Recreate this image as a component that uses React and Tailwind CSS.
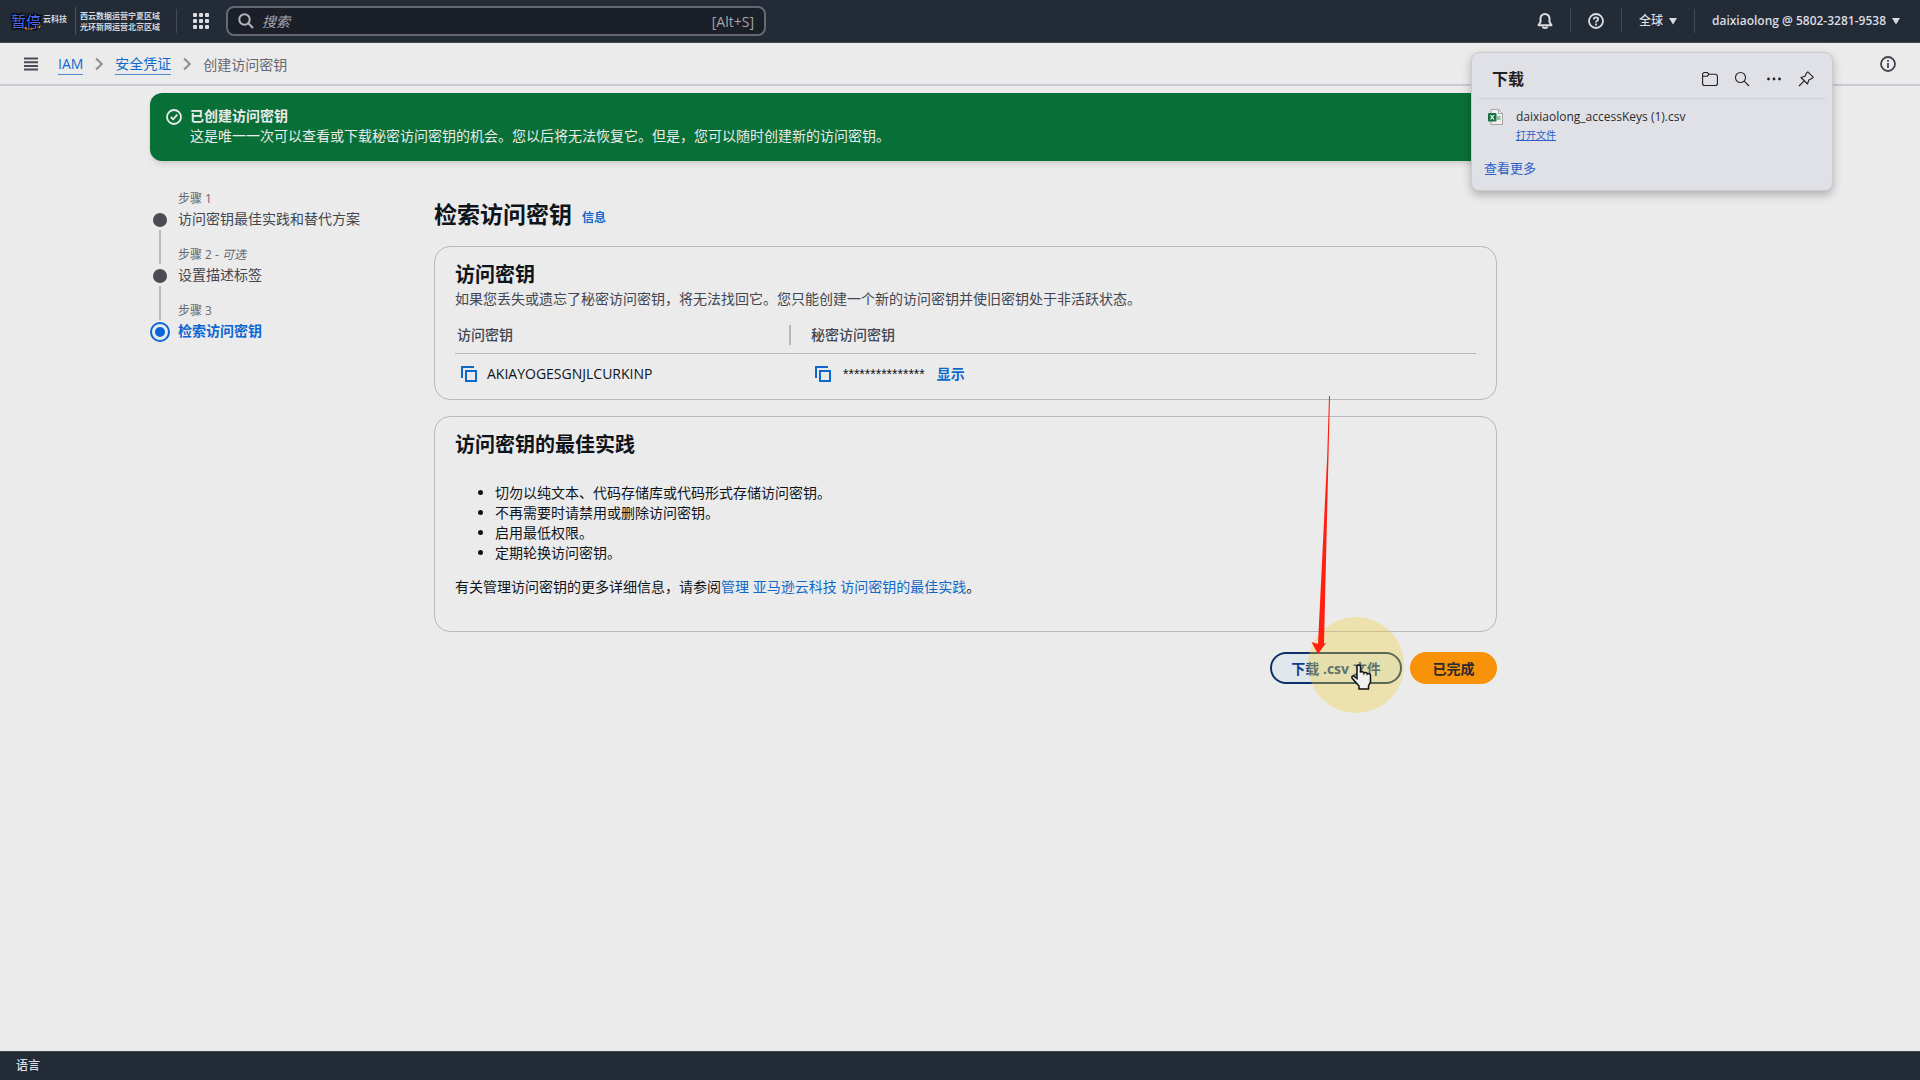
import { useState } from "react";

const ACCESS_KEY = "AKIAYOGESGNJLCURKINP";
const SECRET_MASK = "***************";

const steps = [
  { numero: "步骤 1", titulo: "访问密钥最佳实践和替代方案" },
  { numero: "步骤 2", titulo: "设置描述标签", opcional: true },
  { numero: "步骤 3", titulo: "检索访问密钥", activo: true },
];

const practices = [
  "切勿以纯文本、代码存储库或代码形式存储访问密钥。",
  "不再需要时请禁用或删除访问密钥。",
  "启用最低权限。",
  "定期轮换访问密钥。",
];

function Chevron() {
  return (
    <svg className="h-4 w-4 text-[#8c8c94]" viewBox="0 0 16 16" fill="none" stroke="currentColor" strokeWidth="2">
      <path d="M5 2.5 10.8 8 5 13.5" />
    </svg>
  );
}

function CopyIcon() {
  return (
    <svg className="h-4 w-4" viewBox="0 0 16 16" fill="none" stroke="currentColor" strokeWidth="2">
      <path d="M1 12V1h12" />
      <path d="M5 5h10v10H5z" />
    </svg>
  );
}

function Caret() {
  return (
    <svg className="h-2 w-2" viewBox="0 0 8 8" fill="currentColor">
      <path d="M0 1h8L4 7.5z" />
    </svg>
  );
}

function Divider() {
  return <span className="h-6 w-px bg-[#424a55]" />;
}

function Logo() {
  return (
    <a href="#" className="flex h-11 items-center">
      <span className="relative flex items-center">
        <svg className="h-5 w-8" viewBox="0 0 32 20" fill="none">
          <path d="M11 15.5c5 3 11 3 16 0" stroke="#f79209" strokeWidth="2" />
          <path d="M26 14.5l3-.5-1 3" stroke="#f79209" strokeWidth="1.4" />
        </svg>
        <span className="absolute left-0 top-0 text-[15px] leading-5 text-[#4a6cf0] [text-shadow:0_0_2px_#000,1px_1px_1px_#000,-1px_-1px_1px_#000,1px_-1px_1px_#000,-1px_1px_1px_#000]">
          暂停
        </span>
        <span className="pb-1 text-[8px] leading-3 font-bold text-[#d5d7da]">云科技</span>
      </span>
      <span className="ml-2 flex h-7 flex-col justify-center border-l border-[#4b525d] pl-1 text-[8px] leading-[11px] font-bold text-[#d5d7da]">
        <span>西云数据运营宁夏区域</span>
        <span>光环新网运营北京区域</span>
      </span>
    </a>
  );
}

function TopBar() {
  return (
    <header className="flex h-[43px] items-center border-b border-[#424650] bg-[#232b36] pr-5 pl-[11px] text-[#dcdce2]">
      <Logo />
      <span className="ml-4 flex">
        <Divider />
      </span>
      <button className="ml-4 p-0" aria-label="服务">
        <svg className="h-4 w-4" viewBox="0 0 16 16" fill="currentColor">
          {[0, 6, 12].map((y) => [0, 6, 12].map((x) => <rect key={`${x}-${y}`} x={x} y={y} width="4" height="4" rx="1" />))}
        </svg>
      </button>
      <label className="ml-[17px] flex h-[30px] w-[540px] items-center rounded-lg border-2 border-[#656871] bg-[#1b1f27] px-2.5">
        <svg className="h-4 w-4 shrink-0 text-[#b4b5bc]" viewBox="0 0 16 16" fill="none" stroke="currentColor" strokeWidth="2">
          <circle cx="6.5" cy="6.5" r="5.2" />
          <path d="M10.3 10.3 15 15" />
        </svg>
        <input
          type="text"
          aria-label="搜索"
          placeholder="搜索"
          className="ml-2 min-w-0 flex-1 bg-transparent text-[14px] outline-none placeholder:text-[#a4a4ad] placeholder:italic"
        />
        <span className="text-[14px] text-[#a4a4ad]">[Alt+S]</span>
      </label>
      <div className="ml-auto flex items-center gap-[17px]">
        <button aria-label="通知">
          <svg className="h-4 w-4" viewBox="0 0 16 16" fill="none" stroke="currentColor" strokeWidth="2" strokeLinejoin="round">
            <path d="M1.5 12.2h13L12.5 9V5.5A4.3 4.3 0 0 0 3.5 5.5V9z" />
            <path d="M5.5 13.5c.5 2 4.5 2 5 0" />
          </svg>
        </button>
        <Divider />
        <button aria-label="帮助">
          <svg className="h-4 w-4" viewBox="0 0 16 16" fill="none" stroke="currentColor" strokeWidth="1.8">
            <circle cx="8" cy="8" r="7" />
            <path d="M5.8 6.5c0-3 4.4-2.8 4.4-.3 0 1.6-2.2 1.5-2.2 3.2M8 10.6v1.8" />
          </svg>
        </button>
        <Divider />
        <button className="flex items-center gap-1.5 text-[12px] font-medium">
          全球 <Caret />
        </button>
        <Divider />
        <button className="flex items-center gap-1.5 text-[12px] font-semibold">
          daixiaolong @ 5802-3281-9538 <Caret />
        </button>
      </div>
    </header>
  );
}

function Breadcrumb() {
  return (
    <div className="flex h-[43px] items-center border-b-2 border-[#cbc9d2] px-6 pt-px text-[14px]">
      <button aria-label="菜单" className="text-[#4c4c56]">
        <svg className="h-3.5 w-3.5" viewBox="0 0 14 14" stroke="currentColor" strokeWidth="2">
          <path d="M0 1.5h14M0 5.2h14M0 8.9h14M0 12.6h14" />
        </svg>
      </button>
      <nav className="ml-5 flex items-center gap-2">
        <a href="#" className="border-b border-[#4d8ad0] leading-5 text-[#0f67c9]">IAM</a>
        <Chevron />
        <a href="#" className="border-b border-[#4d8ad0] leading-5 text-[#0f67c9]">安全凭证</a>
        <Chevron />
        <span className="text-[#656871]">创建访问密钥</span>
      </nav>
      <button aria-label="信息面板" className="ml-auto text-[#424650]">
        <svg className="h-4 w-4" viewBox="0 0 16 16" fill="none" stroke="currentColor" strokeWidth="1.8">
          <circle cx="8" cy="8" r="7" />
          <path d="M8 7v5M8 4v1.8" />
        </svg>
      </button>
    </div>
  );
}

function SuccessBanner() {
  return (
    <div className="flex h-[68px] gap-2 rounded-xl bg-[#086f36] px-4 pt-3 text-[14px] leading-5 text-[#ebebeb] shadow-md">
      <svg className="mt-1 h-4 w-4 shrink-0" viewBox="0 0 16 16" fill="none" stroke="currentColor" strokeWidth="1.8">
        <circle cx="8" cy="8" r="7" />
        <path d="M4.8 8 7.2 10.3 11.3 5.7" />
      </svg>
      <div className="pt-px">
        <p className="font-bold">已创建访问密钥</p>
        <p>这是唯一一次可以查看或下载秘密访问密钥的机会。您以后将无法恢复它。但是，您可以随时创建新的访问密钥。</p>
      </div>
    </div>
  );
}

function Step({ numero, titulo, opcional, activo, primero, ultimo }) {
  return (
    <li className="flex gap-2">
      <div className="flex w-5 flex-col items-center">
        <span className="flex h-[21px] pb-0.5">{!primero && <span className="w-0.5 bg-[#b8b6c1]" />}</span>
        {activo ? (
          <span className="flex h-5 w-5 shrink-0 items-center justify-center rounded-full border-2 border-[#0b66d6]">
            <span className="h-2.5 w-2.5 rounded-full bg-[#0b66d6]" />
          </span>
        ) : (
          <span className="my-[3px] h-3.5 w-3.5 shrink-0 rounded-full bg-[#4b4c55]" />
        )}
        {!ultimo && <span className="w-0.5 flex-1 bg-[#b8b6c1]" />}
      </div>
      <div className={ultimo ? "" : "pb-4"}>
        <p className="text-[12px] leading-5 text-[#656871]">
          {numero}
          {opcional && <> - <i>可选</i></>}
        </p>
        <p className={activo ? "text-[14px] leading-5 font-bold text-[#0b66d6]" : "text-[14px] leading-5 text-[#424650]"}>
          {titulo}
        </p>
      </div>
    </li>
  );
}

function KeysCard() {
  const [visible, setVisible] = useState(false);

  return (
    <section className="rounded-2xl border border-[#b8b6c1] px-5 pt-4 pb-[5px]">
      <h2 className="mb-0.5 text-[20px] leading-6 font-bold text-[#0f141a]">访问密钥</h2>
      <p className="text-[14px] leading-5 text-[#424650]">
        如果您丢失或遗忘了秘密访问密钥，将无法找回它。您只能创建一个新的访问密钥并使旧密钥处于非活跃状态。
      </p>
      <table className="mt-4 w-full table-fixed text-left text-[14px]">
        <thead>
          <tr className="border-b border-[#b8b6c1] text-[#424650]">
            <th className="w-[336px] pt-0 pr-0 pb-2 pl-0.5 font-medium">
              <div className="border-r-2 border-[#b8b6c1] leading-5">访问密钥</div>
            </th>
            <th className="pt-0 pb-2 pl-5 leading-5 font-medium">秘密访问密钥</th>
          </tr>
        </thead>
        <tbody>
          <tr className="text-[#0f141a]">
            <td className="py-2.5 pl-1.5">
              <div className="flex items-center gap-2.5">
                <button aria-label="复制访问密钥" className="text-[#0f67c9]"><CopyIcon /></button>
                <span className="leading-5">{ACCESS_KEY}</span>
              </div>
            </td>
            <td className="py-2.5 pl-6">
              <div className="flex items-center gap-3">
                <button aria-label="复制秘密访问密钥" className="text-[#0f67c9]"><CopyIcon /></button>
                <span className="font-['Liberation_Sans',sans-serif] leading-5">{SECRET_MASK}</span>
                <button onClick={() => setVisible(!visible)} className="leading-5 font-bold text-[#0f67c9]">
                  {visible ? "隐藏" : "显示"}
                </button>
              </div>
            </td>
          </tr>
        </tbody>
      </table>
    </section>
  );
}

function PracticesCard() {
  return (
    <section className="rounded-2xl border border-[#b8b6c1] px-5 pt-4 pb-[34px] text-[14px] leading-5 text-[#0f141a]">
      <h2 className="text-[20px] leading-6 font-bold">访问密钥的最佳实践</h2>
      <ul className="mt-[26px] list-disc pl-10">
        {practices.map((p) => (
          <li key={p}>{p}</li>
        ))}
      </ul>
      <p className="mt-3.5">
        有关管理访问密钥的更多详细信息，请参阅
        <a href="#" className="text-[#0f67c9]">管理 亚马逊云科技 访问密钥的最佳实践</a>。
      </p>
    </section>
  );
}

function DownloadsPopup() {
  return (
    <aside className="absolute top-[52px] right-[87px] w-[362px] rounded-lg border border-[#cfc8cb] bg-[#e0e1e7] px-1.5 shadow-[0_4px_10px_rgba(0,0,0,0.25)]">
      <div className="flex h-[46px] items-center border-b border-[#d0d1d7] pr-3 pl-3.5 pt-1.5 text-[#222]">
        <h2 className="text-[16px] font-bold">下载</h2>
        <div className="ml-auto flex items-center gap-4">
          <button aria-label="打开下载文件夹">
            <svg className="h-4 w-4" viewBox="0 0 16 16" fill="none" stroke="currentColor" strokeWidth="1.1">
              <path d="M.6 4V3.5a2 2 0 0 1 2-2h2.700L7 3.200h6.400a2 2 0 0 1 2 2v7.300a2 2 0 0 1-2 2H2.600a2 2 0 0 1-2-2zM.6 5.200h4.700L7 3.200" />
            </svg>
          </button>
          <button aria-label="搜索下载">
            <svg className="h-4 w-4" viewBox="0 0 16 16" fill="none" stroke="currentColor" strokeWidth="1.1">
              <circle cx="6.5" cy="6.5" r="5" />
              <path d="M10.2 10.2 15 15" />
            </svg>
          </button>
          <button aria-label="更多选项">
            <svg className="h-4 w-4" viewBox="0 0 16 16" fill="currentColor">
              <circle cx="2.5" cy="8" r="1.4" />
              <circle cx="8" cy="8" r="1.4" />
              <circle cx="13.5" cy="8" r="1.4" />
            </svg>
          </button>
          <button aria-label="固定">
            <svg className="h-4 w-4" viewBox="0 0 16 16" fill="none" stroke="currentColor" strokeWidth="1.1" strokeLinejoin="round">
              <path d="M9.8.8 15.2 6.2 13.8 7.6 10.8 9l-1.3 4L3 6.5l4-1.3 1.4-3zM6.2 9.8 1 15" />
            </svg>
          </button>
        </div>
      </div>
      <div className="flex gap-3 pt-2 pl-2.5">
        <svg className="mt-0.5 h-4 w-4" viewBox="0 0 16 16">
          <path d="M3 .5h7.5l4 4v11H3z" fill="#f1f1f1" stroke="#a5a5a8" />
          <path d="M10.5.5v4h4" fill="none" stroke="#a5a5a8" />
          <path d="M9 7h3.5v4H9z" fill="#8cc5a6" />
          <rect x="0" y="4" width="8.5" height="8.5" rx="1" fill="#1c7245" />
          <path d="m2.5 6 3.500 4.500M6 6l-3.500 4.500" stroke="#fff" strokeWidth="1.2" />
        </svg>
        <div>
          <p className="text-[12px] leading-5 text-[#2b2b2e]">daixiaolong_accessKeys (1).csv</p>
          <a href="#" className="block text-[10px] leading-4 text-[#2a62c4] underline">打开文件</a>
        </div>
      </div>
      <a href="#" className="mt-[15px] mb-3 ml-1.5 block text-[13px] leading-5 text-[#2a62c4]">查看更多</a>
    </aside>
  );
}

// click highlight, hand cursor and the arrow drawn over the csv button
function Pointer() {
  return (
    <>
      <span className="pointer-events-none absolute -top-[35px] left-[38px] h-24 w-24 rounded-full bg-[#f0d23c]/35" />
      <svg className="pointer-events-none absolute top-3 left-20 h-7 w-6" viewBox="0 0 24 28">
        <path
          d="M7 2.5c0-2 3.5-2 3.5 0V8.500c.5-1.300 3.500-1 3.500.6.700-1.200 3.300-.8 3.300.9.900-.9 3.200-.3 3.200 1.500v6.500l-2 4V25H9v-3l-7-8c-.8-1.700 1-2.700 2.300-1.700L7 14.500z"
          fill="#f0f0ee"
          stroke="#111"
          strokeWidth="1.5"
        />
      </svg>
      <svg className="pointer-events-none absolute bottom-[30px] left-10 h-[258px] w-6" viewBox="0 0 24 258" fill="#ff2012">
        <path d="M19 0h1L18.500 60 14 247.500l2-.5-8 11-6.500-12 6.500 2L17.200 60z" />
      </svg>
    </>
  );
}

export default function App() {
  return (
    <div className="relative flex min-h-screen flex-col bg-[#ebebeb] font-['Open_Sans','Noto_Sans_CJK_SC',sans-serif]">
      <TopBar />
      <Breadcrumb />
      <div className="flex-1 px-[150px] pt-[7px]">
        <SuccessBanner />
        <div className="mt-7 flex">
          <ol className="w-[284px] shrink-0">
            {steps.map((s, i) => (
              <Step key={s.numero} {...s} primero={i === 0} ultimo={i === steps.length - 1} />
            ))}
          </ol>
          <main className="min-w-0 flex-1 pr-[273px]">
            <div className="flex h-[57px] items-center gap-2.5 pb-2">
              <h1 className="text-[23px] leading-8 font-bold text-[#0f141a]">检索访问密钥</h1>
              <a href="#" className="mt-2 text-[12px] leading-5 font-bold text-[#0f67c9]">信息</a>
            </div>
            <div className="flex flex-col gap-4">
              <KeysCard />
              <PracticesCard />
            </div>
            <div className="mt-5 flex justify-end gap-2 text-[14px] font-bold">
              <div className="relative">
                <button className="h-8 w-[132px] rounded-full border-2 border-[#0c3068] bg-[#dfe6ec] text-[#0c3f8a]">
                  下载 .csv 文件
                </button>
                <Pointer />
              </div>
              <button className="h-8 w-[87px] rounded-full bg-[#f79209] text-[#2a2a2e]">已完成</button>
            </div>
          </main>
        </div>
      </div>
      <footer className="flex h-[29px] items-center border-t border-[#424650] bg-[#232b36] px-4 text-[12px] text-[#dcdce2]">
        <button className="font-medium">语言</button>
      </footer>
      <DownloadsPopup />
    </div>
  );
}
